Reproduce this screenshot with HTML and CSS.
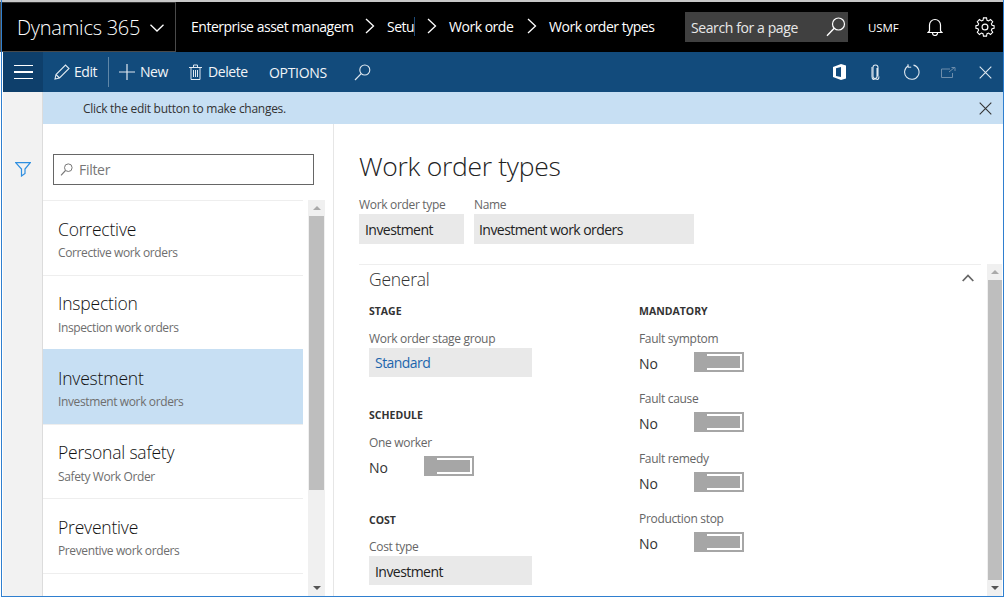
FILE: index.html
```html
<!DOCTYPE html>
<html lang="en">
<head>
<meta charset="utf-8">
<title>Work order types</title>
<link rel="stylesheet" href="styles.css">
</head>
<body>
<div class="window">
  <header class="topbar">
    <div class="brand"><span>Dynamics 365</span>
      <svg class="brand-chev" width="14" height="8" viewBox="0 0 14 8"><path d="M.5.7 7 7 13.5.7" fill="none" stroke="#fff" stroke-width="1.3"/></svg>
    </div>
    <nav class="crumbs">
      <span class="crumb c1">Enterprise asset managem</span>
      <svg class="sep" width="10" height="16" viewBox="0 0 10 16"><path d="M1 1l7.5 7L1 15" fill="none" stroke="#fff" stroke-width="1.3"/></svg>
      <span class="crumb c2">Setu</span>
      <svg class="sep" width="10" height="16" viewBox="0 0 10 16"><path d="M1 1l7.5 7L1 15" fill="none" stroke="#fff" stroke-width="1.3"/></svg>
      <span class="crumb c3">Work orde</span>
      <svg class="sep" width="10" height="16" viewBox="0 0 10 16"><path d="M1 1l7.5 7L1 15" fill="none" stroke="#fff" stroke-width="1.3"/></svg>
      <span class="crumb">Work order types</span>
    </nav>
    <div class="search"><span>Search for a page</span>
      <svg width="20" height="20" viewBox="0 0 20 20"><circle cx="12.5" cy="7" r="6" fill="none" stroke="#fff" stroke-width="1.2"/><path d="M8.2 11.3 1 18.8" stroke="#fff" stroke-width="1.4"/></svg>
    </div>
    <span class="company">USMF</span>
    <svg class="bell" width="16" height="18" viewBox="0 0 16 18"><path d="M2.5 13V7a5.500 5.500 0 0 1 11 0v6l1.500 1.500H1z M5.500 15a2.500 2.500 0 0 0 5 0" fill="none" stroke="#fff" stroke-width="1.200"/></svg>
    <svg class="gear" width="20" height="20" viewBox="-1 -1 22 22"><circle cx="10" cy="10" r="3.200" fill="none" stroke="#fff" stroke-width="1.300"/><path d="M8.300 0h3.400l.5 2.600 1.700.7 2.200-1.500 2.400 2.400-1.500 2.200.7 1.700 2.300.5v2.800l-2.300.5-.7 1.700 1.500 2.200-2.400 2.400-2.200-1.500-1.700.7-.5 2.600H8.300l-.5-2.600-1.700-.7-2.200 1.500-2.400-2.400 1.500-2.200-.7-1.700L0 11.400V8.600l2.300-.5.7-1.700-1.500-2.200 2.400-2.400 2.200 1.500 1.700-.7z" fill="none" stroke="#fff" stroke-width="1.200"/></svg>
  </header>

  <div class="commandbar">
    <button class="menu-btn" aria-label="Menu"><i></i><i></i><i></i></button>
    <div class="cmd cmd-edit">
      <svg width="16" height="16" viewBox="0 0 16 16"><path d="M1 15l1-4.500L11.500 1 15 4.500 5.500 14z M2 10.500 5.500 14" fill="none" stroke="#dfe8f0" stroke-width="1.100"/></svg>
      <span>Edit</span>
    </div>
    <div class="cmd cmd-new">
      <svg width="16" height="16" viewBox="0 0 16 16"><path d="M8 0v16M0 8h16" stroke="#dfe8f0" stroke-width="1.200"/></svg>
      <span>New</span>
    </div>
    <div class="cmd cmd-del">
      <svg width="13" height="16" viewBox="0 0 13 16"><path d="M2 3.500h9V15.500H2z M0 3.500h13 M4.500 3.500V1h4v2.500 M4.500 6v7 M6.500 6v7 M8.500 6v7" fill="none" stroke="#dfe8f0" stroke-width="1"/></svg>
      <span>Delete</span>
    </div>
    <div class="cmd cmd-opt"><span>OPTIONS</span></div>
    <svg class="cmd-search" width="17" height="17" viewBox="0 0 17 17"><circle cx="10.800" cy="6" r="5" fill="none" stroke="#dfe8f0" stroke-width="1.100"/><path d="M7.200 9.600 1 16" stroke="#dfe8f0" stroke-width="1.200"/></svg>
    <div class="cmd-right">
      <svg width="13" height="16" viewBox="0 0 13 16"><path d="M0 3 8 0l5 1.500v13L8 16l-8-3z" fill="#fff"/><path d="M3 4.300 8 3v10l-5-1z" fill="#124b7c"/></svg>
      <svg width="9" height="16" viewBox="0 0 9 16"><path d="M6.500 4v8.500a2 2 0 0 1-4 0V3.500a2.500 2.500 0 0 1 5 0v9" transform="translate(-.5)" fill="none" stroke="#dfe8f0" stroke-width="1.100"/><path d="M1 3v9.500a3.500 3.500 0 0 0 7 0" fill="none" stroke="#dfe8f0" stroke-width="1.100"/></svg>
      <svg width="16" height="16" viewBox="0 0 16 16"><path d="M4.500 1.700a7.200 7.200 0 1 0 5-.6" fill="none" stroke="#dfe8f0" stroke-width="1.100"/><path d="M4 .2v3h3.200" fill="none" stroke="#dfe8f0" stroke-width="1"/></svg>
      <svg width="15" height="11" viewBox="0 0 15 11"><path d="M9 2H.5v8.500h11V6 M8 5l5.500-4.500 M10.500.5h3.500V4" fill="none" stroke="#6d8dab" stroke-width="1"/></svg>
      <svg width="13" height="13" viewBox="0 0 13 13"><path d="M.7.700 12.300 12.300M12.300.700.700 12.300" stroke="#dfe8f0" stroke-width="1.100"/></svg>
    </div>
  </div>

  <div class="body">
    <aside class="rail">
      <svg width="16" height="15" viewBox="0 0 16 15"><path d="M.700.700h14.600L10 7v4.500L6.500 14V7z" fill="none" stroke="#2f8fe0" stroke-width="1.200"/></svg>
    </aside>
    <div class="content">
      <div class="message"><span>Click the edit button to make changes.</span>
        <svg width="13" height="13" viewBox="0 0 13 13"><path d="M.7.700 12.300 12.300M12.300.700.700 12.300" stroke="#333" stroke-width="1.100"/></svg>
      </div>
      <div class="panes">
        <section class="listpane">
          <div class="filter">
            <svg width="13" height="13" viewBox="0 0 13 13"><circle cx="8.300" cy="4.700" r="3.800" fill="none" stroke="#777" stroke-width="1"/><path d="M5.500 7.500 1 12.300" stroke="#777" stroke-width="1.100"/></svg>
            <span>Filter</span>
          </div>
          <div class="listwrap">
            <ul class="list">
              <li class="item"><b>Corrective</b><small>Corrective work orders</small></li>
              <li class="item"><b>Inspection</b><small>Inspection work orders</small></li>
              <li class="item selected"><b>Investment</b><small>Investment work orders</small></li>
              <li class="item"><b>Personal safety</b><small>Safety Work Order</small></li>
              <li class="item"><b>Preventive</b><small>Preventive work orders</small></li>
              <li class="item item-end"></li>
            </ul>
            <div class="scrollbar sb-list"><em class="up"></em><div class="thumb"></div><em class="down"></em></div>
          </div>
        </section>
        <main class="detail">
          <h1>Work order types</h1>
          <div class="header-fields">
            <label class="fld w105"><span class="lbl">Work order type</span><span class="val">Investment</span></label>
            <label class="fld w220"><span class="lbl">Name</span><span class="val">Investment work orders</span></label>
          </div>
          <div class="section-wrap">
            <section class="section">
              <div class="sec-head"><h2>General</h2>
                <svg width="12" height="8" viewBox="0 0 12 8"><path d="M.7 7 6 1.500 11.300 7" fill="none" stroke="#666" stroke-width="1.800"/></svg>
              </div>
              <div class="cols">
                <div class="col col-a">
                  <h3>STAGE</h3>
                  <div class="lbl lbl-f">Work order stage group</div>
                  <div class="val wide link">Standard</div>
                  <h3 class="next">SCHEDULE</h3>
                  <div class="lbl lbl-f">One worker</div>
                  <div class="tog-row"><span>No</span><i class="toggle"></i></div>
                  <h3 class="next2">COST</h3>
                  <div class="lbl lbl-c">Cost type</div>
                  <div class="val wide cost">Investment</div>
                </div>
                <div class="col col-b">
                  <h3>MANDATORY</h3>
                  <div class="lbl lbl-f">Fault symptom</div>
                  <div class="tog-row"><span>No</span><i class="toggle"></i></div>
                  <div class="lbl lbl-n">Fault cause</div>
                  <div class="tog-row"><span>No</span><i class="toggle"></i></div>
                  <div class="lbl lbl-n">Fault remedy</div>
                  <div class="tog-row"><span>No</span><i class="toggle"></i></div>
                  <div class="lbl lbl-n">Production stop</div>
                  <div class="tog-row"><span>No</span><i class="toggle"></i></div>
                </div>
              </div>
            </section>
            <div class="scrollbar sb-main"><em class="up"></em><div class="thumb"></div><em class="down"></em></div>
          </div>
        </main>
      </div>
    </div>
  </div>
</div>
</body>
</html>
```

FILE: styles.css
```css
* { box-sizing: border-box; }
html, body { margin: 0; padding: 0; background: #fff; }
body { font-family: "Open Sans", "Noto Sans", sans-serif; color: #222; overflow: hidden; }
.window { position: relative; width: 1006px; height: 598px; display: flex; flex-direction: column; overflow: hidden; }
.window::before { content: ""; height: 2px; width: 1003px; flex: none; background: #c8c8c8; }
.window::after { content: ""; position: absolute; left: 1px; right: 2px; top: 0; bottom: 1px; border: solid #2f7fcf; border-width: 0 1px 1px; pointer-events: none; }

.topbar { height: 50px; width: 1003px; flex: none; background: #000; color: #fff; display: flex; align-items: center; }
.brand { width: 176px; height: 50px; flex: none; border: 1px solid #4a4a4a; border-top-color: #333; display: flex; align-items: center; padding-left: 16px; font-size: 20px; font-weight: 300; letter-spacing: -.25px; }
.brand-chev { margin-left: 10px; margin-top: 2px; }
.crumbs { display: flex; align-items: center; width: 509px; padding: 0 0 2px 15px; flex: none; font-size: 14px; letter-spacing: -.48px; }
.crumb { white-space: nowrap; }
.c1 { width: 162px; }
.c2 { width: 28px; border-right: 1px solid #1c4a78; }
.c3 { width: 66px; }
.crumbs .sep { margin: 0 12px 0 12px; flex: none; }
.search { width: 163px; height: 30px; flex: none; background: #404040; display: flex; align-items: center; justify-content: space-between; padding: 0 2px 0 6px; font-size: 14px; letter-spacing: -.4px; color: #e8e8e8; }
.company { font-size: 11.500px; margin-left: 20px; width: 54px; letter-spacing: -.1px; }
.bell { margin-left: 5px; flex: none; }
.gear { margin-left: 32px; flex: none; }

.commandbar { height: 40px; flex: none; margin: 0 3px; background: #124b7c; color: #f2f5f8; display: flex; align-items: center; font-size: 14px; letter-spacing: -.42px; }
.menu-btn { width: 40px; height: 40px; flex: none; border: 0; padding: 0; background: #0e3f6b; display: flex; flex-direction: column; justify-content: center; align-items: center; gap: 5px; }
.menu-btn i { display: block; width: 19px; height: 1.500px; background: #fff; }
.cmd { display: flex; align-items: center; height: 30px; flex: none; }
.cmd span { padding-bottom: 2px; }
.cmd-edit { margin-left: 11px; width: 55px; gap: 4px; border-right: 1px solid #5f87a8; }
.cmd-new { margin-left: 10px; gap: 5px; width: 70px; }
.cmd-del { gap: 6px; width: 80px; }
.cmd-opt { letter-spacing: -.3px; }
.cmd-opt span { padding-bottom: 0; }
.cmd-search { margin-left: 27px; flex: none; }
.cmd-right { margin-left: auto; display: flex; align-items: center; padding-right: 11px; }
.cmd-right svg { flex: none; }
.cmd-right svg:nth-child(2) { margin-left: 25px; }
.cmd-right svg:nth-child(3) { margin-left: 24px; }
.cmd-right svg:nth-child(4) { margin-left: 21px; }
.cmd-right svg:nth-child(5) { margin-left: 23px; }

.body { flex: 1; min-height: 0; display: flex; margin: 0 3px 2px; }
.rail { width: 40px; flex: none; background: #f2f2f2; display: flex; justify-content: center; padding-top: 70px; border-right: 1px solid #dcdcdc; }
.content { flex: 1; min-width: 0; display: flex; flex-direction: column; }
.message { height: 32px; flex: none; background: #c7dff3; display: flex; align-items: center; justify-content: space-between; padding: 0 11px 0 40px; font-size: 12px; letter-spacing: -.28px; color: #333; }
.panes { flex: 1; min-height: 0; display: flex; }

.listpane { width: 291px; flex: none; border-right: 1px solid #e6e6e6; display: flex; flex-direction: column; }
.filter { height: 31px; margin: 30px 19px 15px 10px; border: 1px solid #666; display: flex; align-items: center; padding-left: 6px; gap: 6px; color: #777; font-size: 14px; letter-spacing: -.3px; flex: none; }
.listwrap { flex: 1; min-height: 0; display: flex; gap: 5px; overflow: hidden; }
.list { list-style: none; margin: 0; padding: 0; width: 260px; flex: none; }
.item { height: 74.600px; padding: 15.500px 0 0 15px; border-top: 1px solid #eee; display: flex; flex-direction: column; }
.item b { font-weight: 300; font-size: 17.500px; line-height: 24px; letter-spacing: -.2px; color: #111; }
.item small { font-size: 12px; line-height: 16px; margin-top: 4.500px; letter-spacing: -.38px; color: #6e6e6e; }
.item.selected { background: #c7dff3; border-top-color: #c7dff3; }

.scrollbar { background: #f0f0f0; flex: none; display: flex; flex-direction: column; align-items: center; }
.scrollbar em { display: block; height: 16px; flex: none; width: 100%; position: relative; }
.scrollbar em::after { content: ""; position: absolute; left: 50%; margin-left: -4px; top: 6px; border: solid transparent; border-width: 0 4px; }
.scrollbar .up::after { border-bottom: 4px solid #aaa; }
.scrollbar .down::after { border-top: 4px solid #555; }
.thumb { width: 15px; background: #bebebe; }
.sb-list { width: 17px; height: 396px; }
.sb-list .thumb { height: 274px; }
.sb-list .down { margin-top: auto; }
.sb-main { width: 15px; height: 332px; margin-left: 6px; }
.sb-main .thumb { flex: 1; width: 14px; }

.detail { flex: 1; min-width: 0; padding: 0 0 0 25px; display: flex; flex-direction: column; }
h1 { font-size: 26.500px; font-weight: 300; letter-spacing: -.3px; margin: 23px 0 0; line-height: 38px; color: #222; }
.header-fields { display: flex; gap: 10px; margin-top: 12px; }
.fld { display: flex; flex-direction: column; }
.w105 { width: 105px; }
.w220 { width: 220px; }
.w220 .val { padding-left: 5px; }
.lbl { font-size: 12px; line-height: 16px; letter-spacing: -.32px; color: #666; display: block; }
.val { height: 29px; background: #e9e9e9; font-size: 14px; letter-spacing: -.55px; line-height: 29px; padding-left: 6px; color: #222; display: block; margin-top: 2px; white-space: nowrap; }
.fld .val { height: 30px; line-height: 29px; padding-top: 1px; margin-top: 1px; }
.section-wrap { display: flex; margin-top: 20px; align-items: flex-start; }
.section { width: 622px; flex: none; border-top: 1px solid #eee; padding-left: 10px; }
.sec-head { display: flex; align-items: flex-start; justify-content: space-between; height: 30px; padding-right: 7px; }
.sec-head svg { margin-top: 9px; }
.sec-head h2 { margin: -1px 0 0; font-size: 17.500px; font-weight: 300; letter-spacing: -.25px; color: #333; line-height: 30px; }
.cols { display: flex; }
.col-a { width: 270px; }
.col-b { width: 200px; }
h3 { margin: 8px 0 0; font-size: 10.500px; line-height: 16px; font-weight: 700; color: #333; letter-spacing: 0; }
.lbl-f { margin-top: 12px; }
.lbl-c { margin-top: 11px; }
.next { margin-top: 30px; }
.next2 { margin-top: 35px; }
.wide { width: 163px; margin-top: 1px; }
.cost { padding-top: 2px; line-height: 27px; }
.link { color: #1d66ad; }
.tog-row { display: flex; align-items: center; height: 22px; margin-top: 4px; font-size: 14px; color: #333; }
.tog-row span { width: 55px; padding-top: 2px; }
.toggle { display: block; width: 50px; height: 20px; border: 2px solid #a6a6a6; border-left: 0; background: linear-gradient(#a6a6a6, #a6a6a6) left / 13px 100% no-repeat, linear-gradient(#a6a6a6, #a6a6a6) 13px 50% / 33px 12px no-repeat; }
.lbl-n { margin-top: 18px; }
```
